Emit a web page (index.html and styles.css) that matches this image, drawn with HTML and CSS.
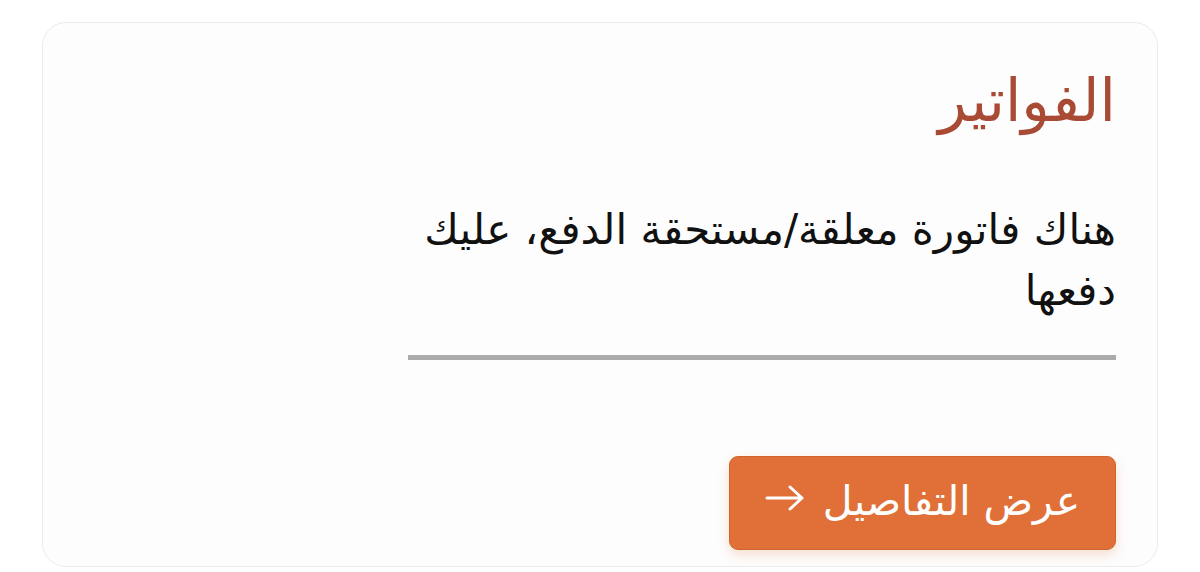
FILE: index.html
```html
<!DOCTYPE html>
<html lang="ar" dir="rtl">
<head>
<meta charset="utf-8">
<link rel="stylesheet" href="styles.css">
</head>
<body>
<div class="card">
  <div class="content">
    <h2 class="title">الفواتير</h2>
    <p class="text">هناك فاتورة معلقة/مستحقة الدفع، عليك دفعها</p>
    <hr class="divider">
    <div class="actions">
      <a class="btn" href="#"><span class="label">عرض التفاصيل</span><svg class="arrow" viewBox="0 0 40 28" width="40" height="28" aria-hidden="true"><path d="M2 14 H37 M25 3 L37 14 L25 25" fill="none" stroke="#ffffff" stroke-width="3" stroke-linecap="round" stroke-linejoin="round"/></svg></a>
    </div>
  </div>
</div>
</body>
</html>
```
FILE: styles.css
```css
html, body {
  margin: 0;
  padding: 0;
  background: #ffffff;
}
body {
  font-family: "DejaVu Sans", "Noto Sans Arabic", sans-serif;
  padding: 22px 42px 0 42px;
}
.card {
  box-sizing: border-box;
  height: 545px;
  border: 1.5px solid #ebebeb;
  border-radius: 24px;
  background: #fdfdfd;
  padding: 0 41px 0 41px;
}
.content {
  width: 708px;
}
.title {
  margin: 0;
  padding-top: 42px;
  font-weight: normal;
  font-size: 59px;
  line-height: 72px;
  color: #a84a34;
}
.text {
  margin: 62px 0 0 0;
  font-size: 42px;
  line-height: 61px;
  color: #111;
}
.divider {
  margin: 34px 0 0 0;
  border: 0;
  height: 5px;
  background: #ababab;
}
.actions {
  margin-top: 96px;
  display: flex;
}
.btn {
  display: flex;
  align-items: center;
  justify-content: center;
  gap: 18px;
  width: 387px;
  height: 94px;
  box-sizing: border-box;
  background: #e07038;
  border: 1px solid #d0642f;
  color: #fff;
  text-decoration: none;
  font-size: 41px;
  border-radius: 9px;
  box-shadow: 0 5px 12px rgba(224, 112, 56, 0.22);
}
.label {
  line-height: 1;
  padding-bottom: 4px;
}
.arrow {
  display: block;
  margin-bottom: 10px;
}
```
